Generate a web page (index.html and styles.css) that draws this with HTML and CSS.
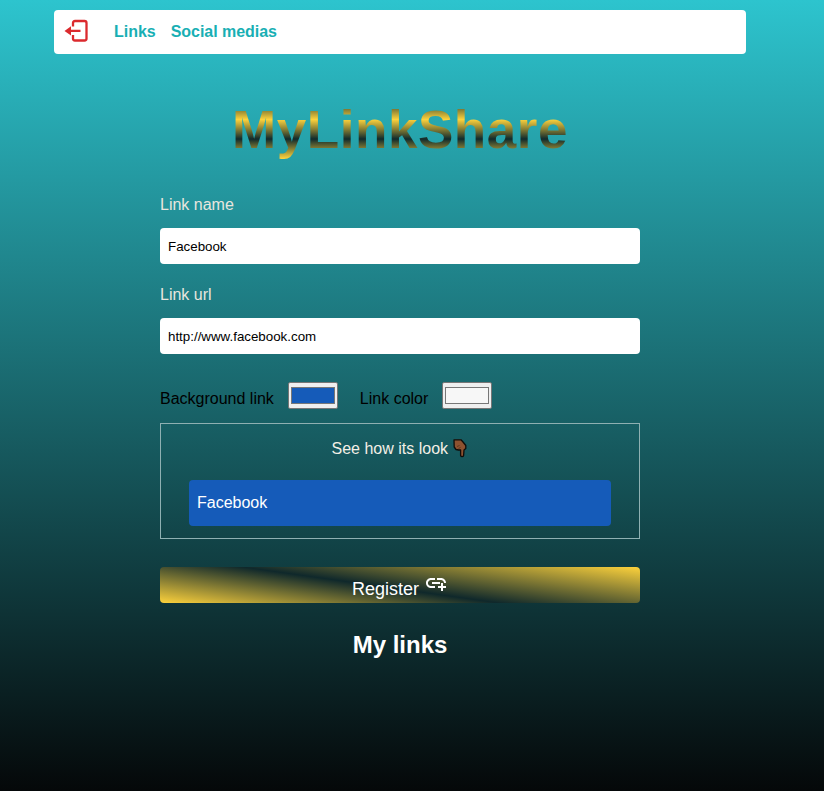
FILE: index.html
```html
<!DOCTYPE html>
<html lang="en">
<head>
<meta charset="utf-8">
<title>MyLinkShare</title>
<link rel="stylesheet" href="styles.css">
</head>
<body>
<div class="page">
  <header class="nav">
    <svg class="logout" viewBox="0 0 26 26" width="26" height="26"><path d="M9 8.500V5Q9 3 11 3H20.500Q22.500 3 22.500 5V20.500Q22.500 22.500 20.500 22.500H11Q9 22.500 9 20.500V17" fill="none" stroke="#db2a2e" stroke-width="2.300"/><path d="M16.500 11.800H7V8.300L.5 12.900 7 17.500V14h9.500z" fill="#db2a2e"/></svg>
    <a>Links</a><a>Social medias</a>
  </header>
  <h1>MyLinkShare</h1>
  <form class="form">
    <label>Link name</label>
    <input class="field" type="text" value="Facebook">
    <label>Link url</label>
    <input class="field" type="text" value="http://www.facebook.com">
    <div class="colors">
      <span>Background link</span><span class="swatch"><i class="blue"></i></span>
      <span class="second">Link color</span><span class="swatch"><i class="white"></i></span>
    </div>
    <section class="preview">
      <p>See how its look <svg class="hand" viewBox="0 0 16 20" width="16" height="20"><path d="M2 1.800H9L11 4l2.800 3.500v3L12 12l-.4 5.500q-.3 1.200-1.500 1.200T8.600 17.500V12H6.500L4 11.500 2.200 9z" fill="#8d5230" stroke="#100c09" stroke-width="1.300" stroke-linejoin="round"/><path d="M5 8.500l2.500-1M6.500 10.500l2-1" stroke="#4e2b18" stroke-width=".7"/></svg></p>
      <div class="sample">Facebook</div>
    </section>
    <button type="button">Register <svg viewBox="0 0 24 24" width="24" height="24"><path fill="#fff" d="M8 11h8v2H8zm12.100 1H22c0-2.760-2.240-5-5-5h-4v1.900h4c1.710 0 3.100 1.390 3.100 3.100zM3.900 12c0-1.710 1.390-3.100 3.100-3.100h4V7H7c-2.760 0-5 2.240-5 5s2.240 5 5 5h4v-1.900H7c-1.710 0-3.100-1.390-3.100-3.100zM19 12h-2v3h-3v2h3v3h2v-3h3v-2h-3z"/></svg></button>
  </form>
  <h2>My links</h2>
</div>
</body>
</html>
```
FILE: styles.css
```css
* { box-sizing: border-box; margin: 0; padding: 0; }
html { height: 100%; }
body {
  height: 791px;
  overflow: hidden;
  background: linear-gradient(#2dc4ce, #050809);
  font: 16px/18px "Liberation Sans", Arial, sans-serif;
}
.page { width: 800px; padding-top: 10px; display: flex; flex-direction: column; align-items: center; }
.nav {
  width: 692px; height: 44px; padding-left: 10px;
  display: flex; align-items: center;
  background: #fff; border-radius: 4px;
  color: #18afb4; font-weight: bold;
}
.logout { margin: 0 24px 2px 0; }
.nav a { margin-right: 15px; letter-spacing: -0.03px; }
h1 {
  margin-top: 44px;
  height: 64px;
  font-size: 53px; line-height: 63px; letter-spacing: 0.55px;
  color: transparent;
  background: repeating-linear-gradient(#102a2c 2px, #fdd23c 21.500px, #102a2c 41px);
  -webkit-background-clip: text; background-clip: text;
}
.form { width: 480px; margin-top: 34px; display: flex; flex-direction: column; }
label { color: #e8e6df; margin-bottom: 14px; }
.field {
  height: 36px; margin-bottom: 22px; padding: 0 8px;
  border: 0; border-radius: 4px; background: #fff; color: #000;
  font: 13.333px "Liberation Sans", Arial, sans-serif;
}
.colors { display: flex; align-items: flex-start; height: 41px; margin-top: 6px; color: #000; }
.colors > span:not(.swatch) { margin-top: 8px; }
.swatch {
  width: 50px; height: 27px; margin-left: 14px; padding: 4px 2px;
  border: 1px solid #767676; border-radius: 2px; background: #efefef;
}
.swatch i { display: block; height: 17px; border: 1px solid #777; }
.blue { background: #155bb9; }
.white { background: #f7f7f7; }
.second { margin-left: 22px; }
.preview { height: 116px; padding: 14px 28px 0; border: 1px solid #8fb0b2; }
.preview p { height: 18px; text-align: center; color: #f3efe6; white-space: nowrap; }
.hand { vertical-align: -4px; }
.sample { margin-top: 24px; height: 46px; padding: 14px 8px; border-radius: 4px; background: #155bb9; color: #fff; }
button {
  height: 36px; margin-top: 28px; padding-top: 4px;
  display: flex; justify-content: center; align-items: flex-start; gap: 5px;
  border: 0; border-radius: 4px; color: #fff;
  font: 18px/36px "Liberation Sans", Arial, sans-serif;
  background: linear-gradient(8deg, #fdd23c, #0f282b 46%, #fdd23c);
}
h2 { margin-top: 28px; font-size: 24px; line-height: 28px; color: #fff; }
```
